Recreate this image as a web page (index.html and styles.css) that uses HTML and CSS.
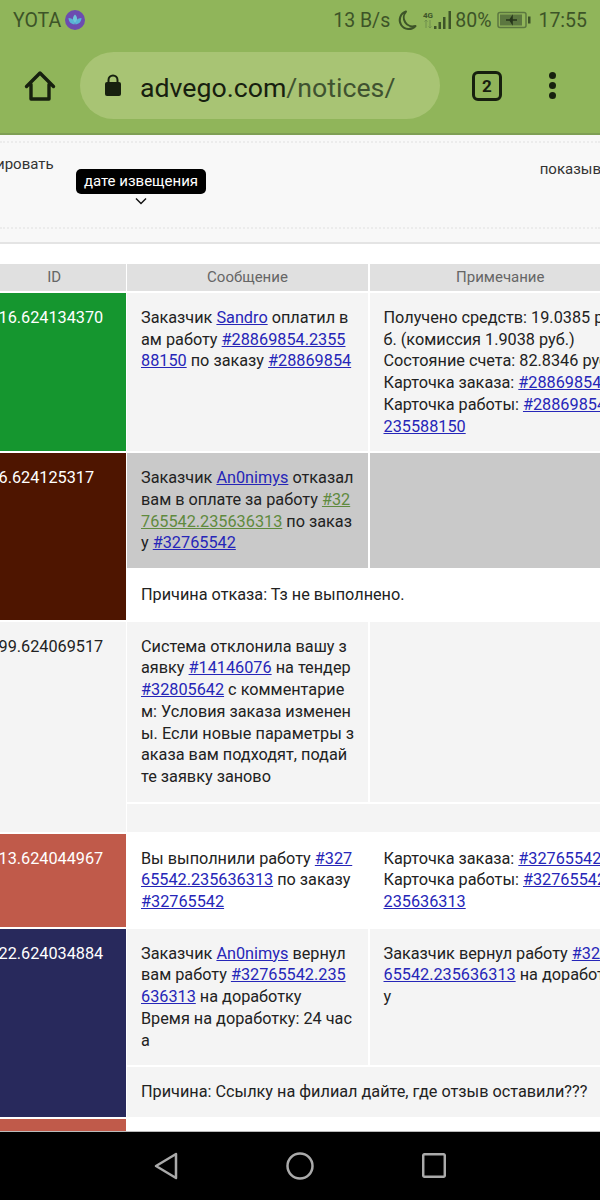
FILE: index.html
```html
<!DOCTYPE html>
<html lang="en">
<head>
    <meta charset="UTF-8">
    <meta name="viewport" content="width=device-width, initial-scale=1.0">
    <title>Извещения</title>
    <link rel="stylesheet" href="styles.css">
</head>
<body>
    <div class="status-bar">
        <span class="carrier">YOTA</span>
        <svg class="carrier-icon" width="20" height="20" viewBox="0 0 20 20">
            <circle cx="10" cy="10" r="10" fill="#6c4cb0"/>
            <path d="M10 4.500c1.800 1.700 2.400 3.800 2 6.200l-2 3-2-3c-.4-2.400.2-4.500 2-6.200z" fill="#6fc6d8"/>
            <path d="M3.500 8c2.500 0 4.500 1.200 5.500 3.200l1 3c-3.500.3-6.200-1.800-6.500-6.200zM16.500 8c-2.500 0-4.500 1.200-5.500 3.200l-1 3c3.500.3 6.200-1.800 6.500-6.200z" fill="#58b4d6"/>
        </svg>
        <div class="status-right">
            <span class="speed">13 B/s</span>
            <svg width="20" height="22" viewBox="0 0 20 22">
                <path d="M9 2.500a9 9 0 0 0 9.500 14.500A9 9 0 1 1 9 2.500z" fill="none" stroke="#3d5428" stroke-width="2" stroke-linejoin="round"/>
            </svg>
            <svg class="signal" width="30" height="20" viewBox="0 0 30 20">
                <text x="0" y="7.500" class="net-label">4G</text>
                <path d="M3 10v8M1.500 11.500 3 10l1.500 1.500M7 10v8M5.500 16.500 7 18l1.500-1.500" fill="none" stroke="#6f8f4c" stroke-width="1"/>
                <rect x="11" y="16" width="2.500" height="3" fill="#3d5428"/>
                <rect x="15.500" y="12" width="2.500" height="7" fill="#3d5428"/>
                <rect x="20" y="7" width="2.500" height="12" fill="#3d5428"/>
                <rect x="25.500" y="1" width="2.500" height="18" fill="#3d5428"/>
            </svg>
            <span class="percent">80%</span>
            <svg width="34" height="18" viewBox="0 0 34 18">
                <rect x="1" y="1.500" width="28" height="15" rx="2" fill="none" stroke="#5c7740" stroke-width="1.500"/>
                <rect x="3" y="3.500" width="22" height="11" fill="#5c7740"/>
                <path d="M9 9h11M15 6l-2 3 2 3z" fill="#26351a" stroke="#26351a" stroke-width="1.600"/>
                <rect x="31" y="5.500" width="2.500" height="7" fill="#3d5428"/>
            </svg>
            <span class="clock">17:55</span>
        </div>
    </div>

    <div class="toolbar">
        <svg class="home-icon" width="32" height="32" viewBox="0 0 32 32">
            <path d="M7 14.500V29h18V14.500M2.500 16.500 16 3l13.500 13.500" fill="none" stroke="#17200f" stroke-width="3.400" stroke-linejoin="round" stroke-linecap="round"/>
        </svg>
        <div class="url-pill">
            <svg width="18" height="23" viewBox="0 0 18 23">
                <path d="M4.500 9V6a4.500 4.500 0 0 1 9 0v3" fill="none" stroke="#17200f" stroke-width="2"/>
                <rect x="1" y="8" width="16" height="14" rx="2" fill="#17200f"/>
            </svg>
            <span class="url"><span class="url-host">advego.com</span>/notices/</span>
        </div>
        <span class="tabs-count">2</span>
        <div class="menu-dots">
            <span class="menu-dot"></span>
            <span class="menu-dot"></span>
            <span class="menu-dot"></span>
        </div>
    </div>

    <div class="page">
        <div class="filter-panel">
            <div class="filter-inner">
                <span class="filter-left">ировать</span>
                <span class="filter-right">показыв</span>
            </div>
            <div class="date-tooltip">дате извещения</div>
            <svg class="date-chevron" width="12" height="8" viewBox="0 0 12 8">
                <path d="M1 1.500 6 6.500l5-5" fill="none" stroke="#111" stroke-width="1.400"/>
            </svg>
        </div>

        <div class="notices">
            <div class="table-head">
                <div class="head-cell">ID</div>
                <div class="head-cell">Сообщение</div>
                <div class="head-cell">Примечание</div>
            </div>

            <div class="notice">
                <div class="id-cell id-green">16.624134370</div>
                <div class="cell">Заказчик <a href="#">Sandro</a> оплатил в<br>ам работу <a href="#">#28869854.2355<br>88150</a> по заказу <a href="#">#28869854</a></div>
                <div class="cell">Получено средств: 19.0385 р<br>б. (комиссия 1.9038 руб.)<br>Состояние счета: 82.8346 руб.<br>Карточка заказа: <a href="#">#28869854</a><br>Карточка работы: <a href="#">#28869854.<br>235588150</a></div>
            </div>

            <div class="notice">
                <div class="id-cell id-tall id-maroon">6.624125317</div>
                <div class="cell cell-grey">Заказчик <a href="#">An0nimys</a> отказал<br>вам в оплате за работу <a class="visited" href="#">#32<br>765542.235636313</a> по заказ<br>у <a href="#">#32765542</a></div>
                <div class="cell cell-grey"></div>
                <div class="reason reason-white">Причина отказа: Тз не выполнено.</div>
            </div>

            <div class="notice">
                <div class="id-cell id-tall id-plain">99.624069517</div>
                <div class="cell">Система отклонила вашу з<br>аявку <a href="#">#14146076</a> на тендер<br><a href="#">#32805642</a> с комментарие<br>м: Условия заказа изменен<br>ы. Если новые параметры з<br>аказа вам подходят, подай<br>те заявку заново</div>
                <div class="cell"></div>
                <div class="reason"></div>
            </div>

            <div class="notice">
                <div class="id-cell id-red">13.624044967</div>
                <div class="cell cell-white">Вы выполнили работу <a href="#">#327<br>65542.235636313</a> по заказу<br><a href="#">#32765542</a></div>
                <div class="cell cell-white">Карточка заказа: <a href="#">#32765542</a><br>Карточка работы: <a href="#">#32765542.<br>235636313</a></div>
            </div>

            <div class="notice">
                <div class="id-cell id-tall id-navy">22.624034884</div>
                <div class="cell">Заказчик <a href="#">An0nimys</a> вернул<br>вам работу <a href="#">#32765542.235<br>636313</a> на доработку<br>Время на доработку: 24 час<br>а</div>
                <div class="cell">Заказчик вернул работу <a href="#">#32<br>65542.235636313</a> на доработк<br>у</div>
                <div class="reason">Причина: Ссылку на филиал дайте, где отзыв оставили???</div>
            </div>

            <div class="notice">
                <div class="id-cell id-red"></div>
                <div class="cell cell-white"></div>
                <div class="cell cell-white"></div>
            </div>
        </div>
    </div>

    <div class="nav-bar">
        <svg width="24" height="28" viewBox="0 0 24 28">
            <path d="M22 2 2 14l20 12z" fill="none" stroke="#aaa" stroke-width="2.500" stroke-linejoin="round"/>
        </svg>
        <svg width="28" height="28" viewBox="0 0 28 28">
            <circle cx="14" cy="14" r="12.500" fill="none" stroke="#aaa" stroke-width="2.500"/>
        </svg>
        <svg width="24" height="25" viewBox="0 0 24 25">
            <rect x="1.200" y="1.200" width="21.600" height="22.600" rx="1.500" fill="none" stroke="#aaa" stroke-width="2.500"/>
        </svg>
    </div>
</body>
</html>
```

FILE: styles.css
```css
* {
    box-sizing: border-box;
}
html, body {
    margin: 0;
    height: 1200px;
    overflow: hidden;
}
body {
    width: 600px;
    display: flex;
    flex-direction: column;
    font-family: Roboto, "Noto Sans", sans-serif;
    font-size: 16.25px;
    color: #222;
    background: #fff;
}

/* phone status bar */
.status-bar {
    height: 44px;
    flex: none;
    display: flex;
    align-items: center;
    padding: 0 13px 4px 13px;
    background: #90b55a;
    color: #3d5428;
    font-size: 19.5px;
}
.carrier-icon {
    margin-left: 4px;
}
.status-right {
    margin-left: auto;
    display: flex;
    align-items: center;
    gap: 4px;
}
.net-label {
    font-size: 8px;
    font-weight: 700;
    fill: #3d5428;
}
.speed {
    margin-right: 3px;
}
.signal {
    margin-left: 2px;
}
.percent {
    margin-left: -2px;
    margin-right: 2px;
}
.clock {
    margin-left: 3px;
}

/* browser toolbar */
.toolbar {
    height: 91px;
    flex: none;
    display: flex;
    align-items: center;
    padding: 0 0 6px 24px;
    background: #90b55a;
    border-bottom: 2px solid #7f9f55;
}
.url-pill {
    width: 360px;
    height: 67px;
    margin-left: 24px;
    padding-left: 24px;
    display: flex;
    align-items: center;
    gap: 18px;
    border-radius: 34px;
    background: #a8c474;
}
.url {
    padding-top: 4px;
    font-size: 26.7px;
    color: #3f5230;
}
.url-host {
    color: #17200f;
}
.tabs-count {
    width: 30px;
    height: 30px;
    margin-left: 32px;
    display: flex;
    align-items: center;
    justify-content: center;
    border: 3px solid #17200f;
    border-radius: 6px;
    color: #17200f;
    font-size: 17px;
    font-weight: 700;
}
.menu-dots {
    margin-left: 47px;
    display: flex;
    flex-direction: column;
    gap: 3px;
}
.menu-dot {
    width: 7px;
    height: 7px;
    border-radius: 50%;
    background: #17200f;
}

/* page content */
.page {
    flex: 1;
    min-height: 0;
    overflow: hidden;
    background: #fff;
    border-bottom: 1px solid #bbb;
}
.filter-panel {
    position: relative;
    height: 109px;
    padding-top: 6px;
    background: #f8f8f8;
    border-bottom: 2px solid #e4e4e4;
}
.filter-inner {
    height: 88px;
    padding-top: 11px;
    display: flex;
    justify-content: space-between;
    align-items: flex-start;
    overflow: hidden;
    border-top: 2px dotted #ececec;
    border-bottom: 2px dotted #ececec;
    font-size: 15px;
    line-height: 20px;
    color: #333;
    white-space: nowrap;
}
.filter-left {
    margin-left: -4px;
}
.filter-right {
    margin-top: 5px;
    margin-right: -1px;
}
.date-tooltip {
    position: absolute;
    left: 76px;
    top: 34px;
    width: 130px;
    height: 25px;
    border-radius: 5px;
    background: #000;
    color: #fff;
    font-size: 15px;
    line-height: 25px;
    text-align: center;
}
.date-chevron {
    position: absolute;
    left: 135px;
    top: 62px;
}

.notices {
    width: 645px;
    margin: 20px 0 0 -17px;
    display: flex;
    flex-direction: column;
    gap: 2px;
    line-height: 21.7px;
    white-space: nowrap;
}
.table-head, .notice {
    display: grid;
    grid-template-columns: 142.5px 241px 261.5px;
    column-gap: 1.5px;
}
.notice {
    row-gap: 2px;
}
.head-cell {
    height: 27px;
    background: #e0e0e0;
    color: #666;
    font-size: 15px;
    line-height: 26px;
    text-align: center;
}
.id-cell {
    padding: 14px 0 0 15.5px;
}
.id-tall {
    grid-row: span 2;
}
.id-green, .id-maroon, .id-red, .id-navy {
    color: #fff;
}
.id-green {
    background: #15962f;
}
.id-maroon {
    background: #4e1500;
}
.id-red {
    background: #c05a4a;
}
.id-navy {
    background: #28295c;
}
.id-plain {
    background: #f4f4f4;
}
.cell {
    padding: 14px;
    background: #f4f4f4;
}
.cell-grey {
    background: #c9c9c9;
}
.cell-white {
    background: #fff;
}
.reason {
    grid-column: 2 / span 2;
    padding: 14px;
    background: #f4f4f4;
}
.reason-white {
    background: #fff;
}
a {
    color: #2626b8;
}
a.visited {
    color: #5f8a3e;
}

/* phone nav bar */
.nav-bar {
    height: 68px;
    flex: none;
    display: flex;
    align-items: center;
    justify-content: center;
    gap: 108px;
    padding-bottom: 1px;
    background: #000;
}
```
